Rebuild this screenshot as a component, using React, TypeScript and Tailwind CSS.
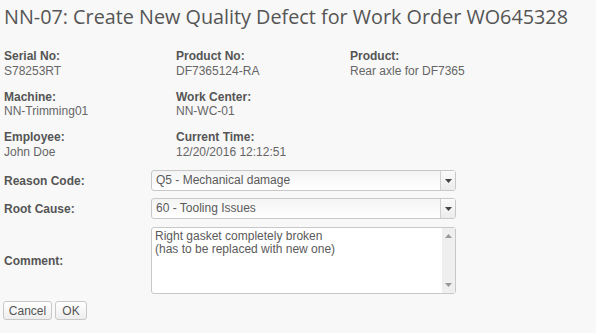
import React from 'react'

const info = [
  [
    { label: 'Serial No:', value: 'S78253RT' },
    { label: 'Product No:', value: 'DF7365124-RA' },
    { label: 'Product:', value: 'Rear axle for DF7365' },
  ],
  [
    { label: 'Machine:', value: 'NN-Trimming01' },
    { label: 'Work Center:', value: 'NN-WC-01' },
  ],
  [
    { label: 'Employee:', value: 'John Doe' },
    { label: 'Current Time:', value: '12/20/2016 12:12:51' },
  ],
]

function Select({ value }: { value: string }) {
  return (
    <div className="flex h-[21px] w-[305px] rounded-[3px] border border-[#c8c8c8] bg-gradient-to-b from-[#f4f4f4] to-white">
      <div className="flex-1 pl-[4px] leading-[19px] text-[#5a5a5a]">{value}</div>
      <div className="flex w-[15px] items-center justify-center border-l border-[#d0d0d0] bg-gradient-to-b from-[#fafafa] to-[#ececec]">
        <svg width="7" height="4" viewBox="0 0 7 4">
          <path d="M0 0h7L3.5 4z" fill="#444" />
        </svg>
      </div>
    </div>
  )
}

export default function App() {
  return (
    <div
      className="h-[333px] w-[596px] overflow-hidden bg-[#f8f8f8] text-[12px] text-[#555]"
      style={{ fontFamily: '"Liberation Sans", Arial, sans-serif' }}
    >
      <h1
        className="pl-[4px] pt-[5px] text-[19.8px] leading-[24px] text-[#555]"
        style={{ fontFamily: '"Open Sans", sans-serif' }}
      >
        NN-07: Create New Quality Defect for Work Order WO645328
      </h1>

      <div className="mt-[20px] flex flex-col gap-[11.5px] pl-[4px]">
        {info.map((row, i) => (
          <div key={i} className="grid grid-cols-[172px_174px_1fr]">
            {row.map(f => (
              <div key={f.label} className="leading-[14.5px]">
                <div className="font-bold text-[#555]">{f.label}</div>
                <div className="text-[#666]">{f.value}</div>
              </div>
            ))}
          </div>
        ))}
      </div>

      <div className="mt-[11px] flex flex-col gap-[7px]">
        <div className="flex items-center">
          <div className="w-[151px] pl-[4px] font-bold">Reason Code:</div>
          <Select value="Q5 - Mechanical damage" />
        </div>
        <div className="flex items-center">
          <div className="w-[151px] pl-[4px] font-bold">Root Cause:</div>
          <Select value="60 - Tooling Issues" />
        </div>
        <div className="mt-[1px] flex items-center">
          <div className="w-[151px] pl-[4px] font-bold">Comment:</div>
          <div className="flex h-[67px] w-[305px] rounded-[3px] border border-[#c8c8c8] bg-white">
            <div className="flex-1 px-[3px] pt-[2px] leading-[13px] text-[#5a5a5a]">
              Right gasket completely broken
              <br />
              (has to be replaced with new one)
            </div>
            <div className="flex w-[13px] flex-col items-center justify-between bg-[#efefef] py-[6px]">
              <svg width="7" height="4" viewBox="0 0 7 4">
                <path d="M0 4h7L3.5 0z" fill="#999" />
              </svg>
              <svg width="7" height="4" viewBox="0 0 7 4">
                <path d="M0 0h7L3.5 4z" fill="#999" />
              </svg>
            </div>
          </div>
        </div>
      </div>

      <div className="mt-[7px] flex gap-[3px] pl-[3px]">
        <button className="h-[19px] w-[49px] rounded-[3px] border border-[#c8c8c8] bg-gradient-to-b from-white to-[#ededed] text-[12px] text-[#555]">
          Cancel
        </button>
        <button className="h-[19px] w-[32px] rounded-[3px] border border-[#c8c8c8] bg-gradient-to-b from-white to-[#ededed] text-[12px] text-[#555]">
          OK
        </button>
      </div>
    </div>
  )
}
